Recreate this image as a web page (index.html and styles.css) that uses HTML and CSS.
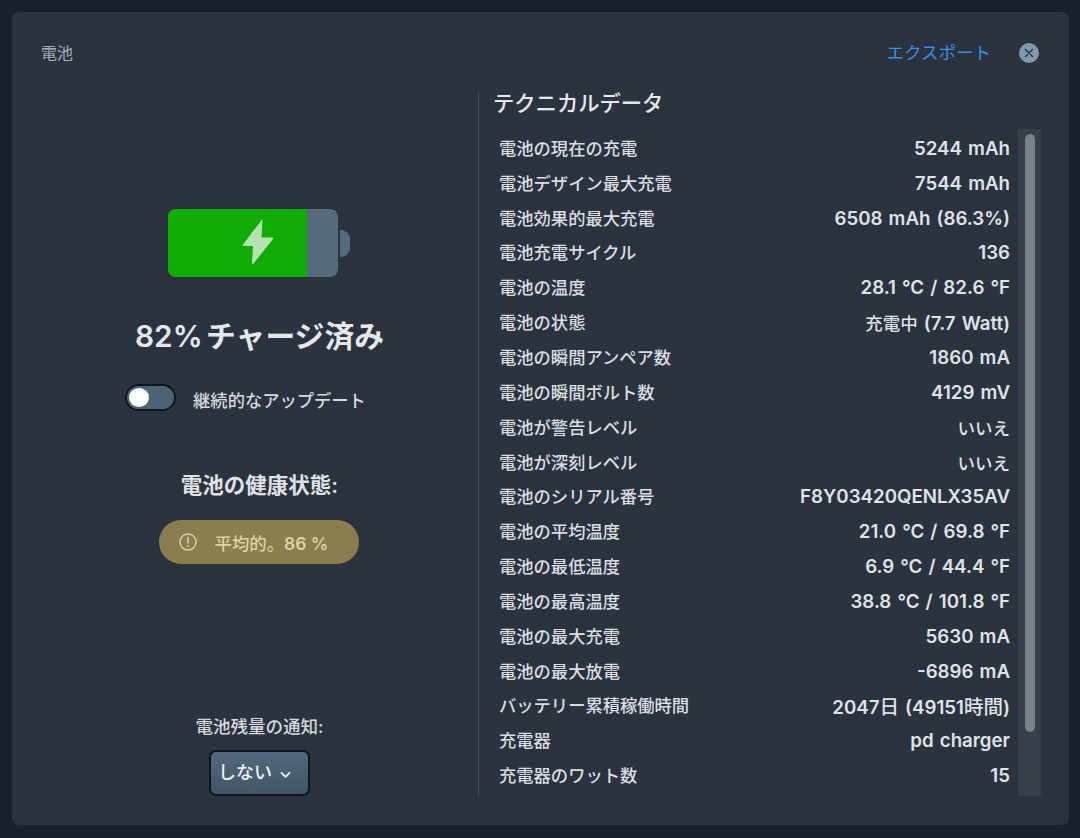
FILE: index.html
```html
<!DOCTYPE html>
<html lang="ja">
<head>
    <meta charset="UTF-8">
    <meta name="viewport" content="width=device-width, initial-scale=1.0">
    <title>電池</title>
    <link rel="stylesheet" href="styles.css">
</head>
<body>

<div class="panel">
    <div class="header">
        <span class="header-title">電池</span>
        <div class="header-actions">
            <a href="#" class="export">エクスポート</a>
            <span class="close">
                <svg width="10" height="10" viewBox="0 0 10 10"><path d="M1.5 1.5l7 7M8.5 1.5l-7 7" stroke="#1f2b38" stroke-width="1.2" stroke-linecap="round"/></svg>
            </span>
        </div>
    </div>
    <div class="content">
        <div class="left">
            <div class="battery">
                <div class="battery-body">
                    <div class="battery-fill"></div>
                    <svg class="bolt" width="34" height="46" viewBox="0 0 34 46"><path d="M21.5 1 L3 25.5 Q2 27 4 27 L13 27 L12 44.5 Q12.5 45.5 13.5 44.5 L33 20 Q34 18.5 32 18.5 L21.5 18.5 L22.5 1.5 Q22 0 21.5 1 Z" fill="#b5e2b0"/></svg>
                </div>
                <div class="battery-tip"></div>
            </div>
            <h2 class="charge">82% チャージ済み</h2>
            <div class="toggle-row">
                <span class="toggle"><span class="knob"></span></span>
                <span class="toggle-label">継続的なアップデート</span>
            </div>
            <h3 class="health-title">電池の健康状態:</h3>
            <div class="health-pill">
                <svg width="20" height="20" viewBox="0 0 20 20" fill="none"><circle cx="10" cy="10" r="8" stroke="#dcd2a6" stroke-width="1.4"/><path d="M10 5.6v5.4" stroke="#dcd2a6" stroke-width="1.6" stroke-linecap="round"/><circle cx="10" cy="14" r="1" fill="#dcd2a6"/></svg>
                <span><span class="jp">平均的。</span>86 %</span>
            </div>
            <div class="notify">
                <div class="notify-label">電池残量の通知:</div>
                <button class="select">しない
                    <svg class="chevron" width="11" height="8" viewBox="0 0 11 8" fill="none"><path d="M1.5 1.8l4 4 4-4" stroke="#f0f2f4" stroke-width="1.8" stroke-linecap="round" stroke-linejoin="round"/></svg>
                </button>
            </div>
        </div>
        <div class="right">
            <h3 class="tech-title">テクニカルデータ</h3>
            <div class="tech-wrap">
                <div class="rows">
                    <div class="row"><span>電池の現在の充電</span><b>5244 mAh</b></div>
                    <div class="row"><span>電池デザイン最大充電</span><b>7544 mAh</b></div>
                    <div class="row"><span>電池効果的最大充電</span><b>6508 mAh (86.3%)</b></div>
                    <div class="row"><span>電池充電サイクル</span><b>136</b></div>
                    <div class="row"><span>電池の温度</span><b>28.1 °C / 82.6 °F</b></div>
                    <div class="row"><span>電池の状態</span><b><i class="jp">充電中</i> (7.7 Watt)</b></div>
                    <div class="row"><span>電池の瞬間アンペア数</span><b>1860 mA</b></div>
                    <div class="row"><span>電池の瞬間ボルト数</span><b>4129 mV</b></div>
                    <div class="row"><span>電池が警告レベル</span><b><i class="jp">いいえ</i></b></div>
                    <div class="row"><span>電池が深刻レベル</span><b><i class="jp">いいえ</i></b></div>
                    <div class="row"><span>電池のシリアル番号</span><b>F8Y03420QENLX35AV</b></div>
                    <div class="row"><span>電池の平均温度</span><b>21.0 °C / 69.8 °F</b></div>
                    <div class="row"><span>電池の最低温度</span><b>6.9 °C / 44.4 °F</b></div>
                    <div class="row"><span>電池の最高温度</span><b>38.8 °C / 101.8 °F</b></div>
                    <div class="row"><span>電池の最大充電</span><b>5630 mA</b></div>
                    <div class="row"><span>電池の最大放電</span><b>-6896 mA</b></div>
                    <div class="row"><span>バッテリー累積稼働時間</span><b>2047<i class="jp big">日</i> (49151<i class="jp big">時間</i>)</b></div>
                    <div class="row"><span>充電器</span><b>pd charger</b></div>
                    <div class="row"><span>充電器のワット数</span><b>15</b></div>
                </div>
                <div class="track"><div class="thumb"></div></div>
            </div>
        </div>
    </div>
</div>

</body>
</html>
```

FILE: styles.css
```css
* {
    box-sizing: border-box;
}
body {
    font-family: Inter, "Noto Sans CJK JP", sans-serif;
    background-color: #19202a;
    margin: 0;
    padding: 12px 11px 13px 12px;
    height: 838px;
    overflow: hidden;
    color: #e2e6ea;
}
.panel {
    height: 813px;
    background-color: #2b333e;
    border-radius: 7px;
    display: flex;
    flex-direction: column;
    padding: 0 28px 29px 29px;
}
.header {
    height: 80px;
    flex: none;
    display: flex;
    justify-content: space-between;
    align-items: center;
    padding-bottom: 1px;
}
.header-title {
    font-size: 16px;
    color: #a3afbc;
}
.header-actions {
    display: flex;
    align-items: center;
    gap: 28px;
    margin-right: 2px;
}
.export {
    font-size: 17.5px;
    color: #3d8fe0;
    text-decoration: none;
}
.close {
    width: 20px;
    height: 20px;
    margin-top: 2px;
    border-radius: 50%;
    background-color: #8197ad;
    display: flex;
    align-items: center;
    justify-content: center;
}
.content {
    flex: 1;
    display: flex;
    min-height: 0;
}
.left {
    width: 438px;
    flex: none;
    border-right: 1px solid #48525e;
    display: flex;
    flex-direction: column;
    align-items: center;
    padding-top: 117px;
}
.jp {
    font-style: normal;
    font-weight: 500;
}
.battery {
    display: flex;
    align-items: center;
    margin-right: 2px;
}
.battery-body {
    position: relative;
    width: 170px;
    height: 68px;
    background-color: #566a7e;
    border-radius: 8px;
    overflow: hidden;
}
.battery-fill {
    width: 139px;
    height: 100%;
    background-color: #0fad05;
}
.bolt {
    position: absolute;
    left: 72px;
    top: 10px;
}
.battery-tip {
    width: 10px;
    height: 27px;
    margin-left: 2px;
    background-color: #566a7e;
    border-radius: 0 9px 9px 0;
}
.charge {
    margin: 40px 0 0;
    font-size: 29.8px;
    line-height: 38px;
    font-weight: 600;
    word-spacing: -4px;
    color: #e4e7eb;
}
.toggle-row {
    display: flex;
    align-items: center;
    gap: 17px;
    margin: 27px 28px 0 0;
}
.toggle {
    width: 51px;
    height: 27px;
    border-radius: 14px;
    border: 2px solid #10151c;
    background-color: #4d6277;
    padding: 2px;
    display: block;
}
.knob {
    display: block;
    width: 20px;
    height: 19px;
    border-radius: 50%;
    background-color: #fff;
}
.toggle-label {
    font-size: 17.3px;
    font-weight: 500;
    color: #d5d9de;
    padding-top: 5px;
}
.health-title {
    margin: 55px 0 0;
    font-size: 21.5px;
    line-height: 36px;
    font-weight: 600;
    color: #dfe3e7;
}
.health-pill {
    margin: 17px 2px 0 0;
    width: 200px;
    height: 44px;
    border-radius: 22px;
    background-color: #8a7d50;
    color: #dcd2a6;
    font-size: 17.4px;
    font-weight: 600;
    display: flex;
    align-items: center;
    gap: 17px;
    padding-left: 19px;
}
.notify {
    margin-top: auto;
    display: flex;
    flex-direction: column;
    align-items: center;
}
.notify-label {
    font-size: 17.5px;
    line-height: 24px;
    font-weight: 500;
    color: #d5d9de;
    margin-bottom: 11px;
}
.select {
    width: 101px;
    height: 46px;
    border: 2px solid #10151c;
    border-radius: 7px;
    background: linear-gradient(#54697e, #435567);
    color: #f0f2f4;
    font-family: inherit;
    font-size: 18px;
    font-weight: 500;
    display: flex;
    align-items: center;
    gap: 8px;
    padding: 0 0 4px 7px;
}
.chevron {
    margin-top: 8px;
}
.right {
    flex: 1;
    display: flex;
    flex-direction: column;
    min-width: 0;
}
.tech-title {
    margin: 0 0 14px 14px;
    font-size: 21.3px;
    line-height: 23px;
    font-weight: 500;
    color: #e6e9ec;
}
.tech-wrap {
    flex: 1;
    display: flex;
    min-height: 0;
}
.rows {
    flex: 1;
    padding: 1px 8px 0 20px;
}
.row {
    display: flex;
    justify-content: space-between;
    align-items: center;
    height: 34.85px;
    font-size: 17.3px;
}
.row span {
    font-weight: 500;
    color: #dadee2;
}
.row b {
    font-size: 18.7px;
    font-weight: 600;
    word-spacing: 1.4px;
    padding-top: 2px;
    color: #dfe3e7;
}
.row .jp {
    font-size: 17.5px;
}
.row .big {
    font-size: 19.5px;
}
.track {
    width: 23px;
    flex: none;
    background-color: #363f4a;
    padding: 5px 6px 0 7px;
}
.thumb {
    height: 598px;
    border-radius: 6px;
    background-color: #7a8289;
}
```
